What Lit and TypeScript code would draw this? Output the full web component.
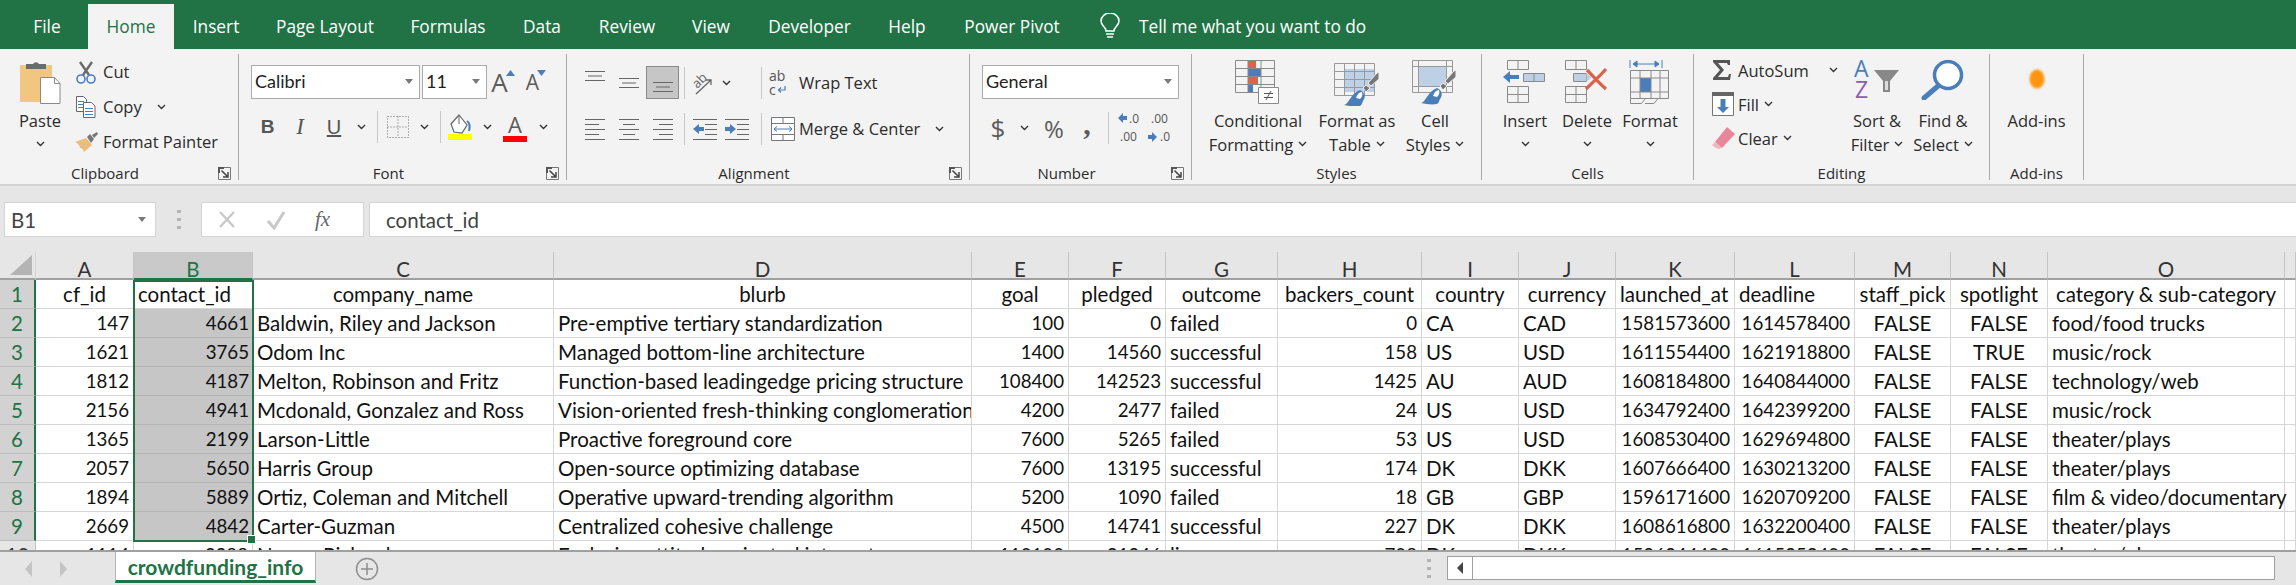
import { LitElement, css, html, svg } from "lit";
import { customElement } from "lit/decorators.js";

const GRID = "#8a8a8a";
const BLUE = "#4a7ebb";
const PALE = "#bdd0e6";
const RED = "#d9644a";

const ico = (w: number, h: number, body: unknown) =>
  html`<svg class="ico" width=${w} height=${h} viewBox="0 0 ${w} ${h}">${body}</svg>`;

const chev = () =>
  ico(9, 6, svg`<path d="M1 1l3.5 3.5L8 1" fill="none" stroke="#333" stroke-width="1.4"/>`);
const caret = () => ico(8, 5, svg`<path d="M0 0h8L4 5z" fill="#7a7a7a"/>`);
const launcher = () =>
  ico(13, 13, svg`<path d="M.5 12.5V.5h12v12z" fill="none" stroke="#777"/><path d="M0 0h6v2H2v4H0z" fill="#555"/><path d="M3.5 3.5l6 6M10 5v5H5" fill="none" stroke="#444" stroke-width="1.5"/>`);

const lines = (rows: [number, number][], y0: number, step: number, color = "#666") =>
  rows.map(([a, b], i) => svg`<path d="M${a} ${y0 + i * step + 0.5}H${b}" stroke=${color}/>`);

const pasteIcon = ico(46, 46, svg`
  <path d="M3 5h32v37H3z" fill="#f0c681"/>
  <path d="M9 9V4h7a3.5 3.5 0 0 1 6 0h7v5z" fill="#6b6b6b"/>
  <path d="M23.5 17.5h14l5.5 6v20h-19.500z" fill="#fff" stroke="#8a8a8a"/>
  <path d="M37.500 17.500v6h5.500" fill="none" stroke="#8a8a8a"/>`);
const cutIcon = ico(22, 24, svg`
  <path d="M8 15L17 2M14 15L5 2" stroke="#6b6b6b" stroke-width="2.4" fill="none"/>
  <circle cx="6" cy="19" r="4" fill="none" stroke=${BLUE} stroke-width="1.6"/>
  <circle cx="16" cy="19" r="4" fill="none" stroke=${BLUE} stroke-width="1.6"/>`);
const copyIcon = ico(22, 24, svg`
  <path d="M1.500 1.500h7l3 3v12h-10z" fill="#fff" stroke="#666"/>
  <path d="M8.500 7.500h8l3.500 3.500v11.500h-11.500z" fill="#fff" stroke="#666"/>
  ${lines([[3, 9], [3, 9], [3, 8]], 6, 3, BLUE)}
  ${lines([[10, 18], [10, 18], [10, 18]], 13, 3, BLUE)}`);
const painterIcon = ico(24, 22, svg`
  <path d="M0 11l11-4 6 7-8 7c-1-3-2-4-4-4 0-2-2-5-5-6z" fill="#e8bd7d"/>
  <path d="M12 6l3-3 4 5-3 4z" fill="#777"/>
  <path d="M17 4l5-3 1 2-4 4z" fill="#777"/>`);

const growIcon = ico(9, 6, svg`<path d="M0 6l4.500-6L9 6z" fill=${BLUE}/>`);
const shrinkIcon = ico(9, 6, svg`<path d="M0 0h9L4.500 6z" fill=${BLUE}/>`);
const bordersIcon = ico(22, 22, svg`
  <path d="M.5.5h21v21H.5zM11 .5v21M.5 11h21" fill="none" stroke="#666" stroke-dasharray="1 2"/>`);
const fillIcon = ico(26, 26, svg`
  <path d="M11 1l8 10-5 8-8-1-3-8z" fill="#fff" stroke="#666" stroke-width="1.200"/>
  <path d="M11 1v9" stroke="#666"/>
  <path d="M19 7c3 2 3 6 2 10" fill="none" stroke=${BLUE} stroke-width="2"/>
  <path d="M0 20h24v6H0z" fill="#ffff00"/>`);

const alignIcon = (rows: [number, number][], y0: number, step: number) =>
  ico(24, 24, lines(rows, y0, step));
const alignTop = alignIcon([[2, 22], [5, 19], [2, 22]], 0, 4.5);
const alignMid = alignIcon([[2, 22], [5, 19], [2, 22]], 7, 4.5);
const alignBot = alignIcon([[2, 22], [5, 19], [2, 22]], 11, 4.5);
const alignL = alignIcon([[2, 22], [2, 16], [2, 22], [2, 16], [2, 22]], 2, 5);
const alignC = alignIcon([[2, 22], [6, 18], [2, 22], [6, 18], [2, 22]], 2, 5);
const alignR = alignIcon([[2, 22], [8, 22], [2, 22], [8, 22], [2, 22]], 2, 5);
const orientIcon = ico(24, 26, svg`
  <text x="2" y="15" transform="rotate(-45 9 12)" font-family="Open Sans" font-size="13" fill="#666">ab</text>
  <path d="M5 24L20 10M15 10h5v5" fill="none" stroke="#666" stroke-width="1.300"/>`);
const indentDec = ico(26, 24, svg`
  ${lines([[1, 25], [13, 25], [13, 25], [13, 25], [1, 25]], 2, 5)}
  <path d="M1 12l6-5v3h5v4H7v3z" fill=${BLUE}/>`);
const indentInc = ico(26, 24, svg`
  ${lines([[1, 25], [13, 25], [13, 25], [13, 25], [1, 25]], 2, 5)}
  <path d="M12 12L6 7v3H1v4h5v3z" fill=${BLUE}/>`);
const wrapIcon = ico(20, 28, svg`
  <text x="1" y="12" font-family="Open Sans" font-size="14" fill="#555">ab</text>
  <text x="1" y="26" font-family="Open Sans" font-size="14" fill="#555">c</text>
  <path d="M17 17v4h-6M13 18.500L10.500 21l2.500 2.500" fill="none" stroke=${BLUE} stroke-width="1.200"/>`);
const mergeIcon = ico(24, 24, svg`
  <path d="M.5.5h23v23H.5zM.5 6.500h23M.5 17.500h23M12 .5v6M12 17.500v6" fill="#fff" stroke="#777"/>
  <path d="M3 12h18M3 12l3-2.500M3 12l3 2.500M21 12l-3-2.500M21 12l-3 2.500" fill="none" stroke=${BLUE}/>`);
const incDec = ico(26, 36, svg`
  <path d="M0 8l5-5v3h4v4H5v3z" fill=${BLUE}/>
  <text x="11" y="13" font-family="Open Sans" font-size="12" fill="#555">.0</text>
  <text x="2" y="31" font-family="Open Sans" font-size="12" fill="#555">.00</text>`);
const decInc = ico(26, 36, svg`
  <text x="4" y="13" font-family="Open Sans" font-size="12" fill="#555">.00</text>
  <path d="M10 27l-5-5v3H1v4h4v3z" fill=${BLUE}/>
  <text x="13" y="31" font-family="Open Sans" font-size="12" fill="#555">.0</text>`);

const brush = (x: number, y: number) => svg`
  <g transform="translate(${x} ${y})">
    <path d="M33 1l-9 10 3 3 8-7V0z" fill="#777" stroke="#f3f3f3"/>
    <path d="M22 13l-3 3 3 4 4-4z" fill="#777" stroke="#f3f3f3"/>
    <path d="M0 33c5-1 7-12 16-15 5 2 6 7 3 11-1 2-1 4-3 5C11 35 5 34 0 33z" fill=${BLUE}/>
    <path d="M12 26c1-3 3-6 6-6 1 3 0 5-2 7z" fill="#fff"/>
  </g>`;
const condIcon = ico(46, 44, svg`
  <path d="M13 1h8v7h-8z" fill=${RED}/><path d="M13 9h13v7H13z" fill=${BLUE}/>
  <path d="M13 17h10v7H13z" fill=${RED}/><path d="M13 25h5v7h-5z" fill=${BLUE}/>
  <path d="M.5.5h39v32H.5zM13 .5v32M26 .5v32M.5 8.500h39M.5 16.500h39M.5 24.500h39" fill="none" stroke=${GRID}/>
  <path d="M23.500 27.500h20v16h-20z" fill="#fff" stroke=${GRID}/>
  <path d="M29 33.500h9M29 37.500h9M36 31l-5 9" fill="none" stroke="#555"/>`);
const tableIcon = ico(46, 46, svg`
  <path d="M10 9h31v23H10z" fill=${PALE}/>
  <path d="M.5 3.500h40v32H.5zM10.500 3.500v32M20.500 3.500v32M30.500 3.500v32M.5 11.500h40M.5 19.500h40M.5 27.500h40" fill="none" stroke="#999"/>
  ${brush(10, 12)}`);
const stylesIcon = ico(46, 46, svg`
  <path d="M7 7h27v19H7z" fill=${PALE}/>
  <path d="M.5.5h40v32H.5zM6.500.5v32M34.500.5v32M.5 6.500h40M.5 26.500h40" fill="none" stroke="#999"/>
  ${brush(9, 10)}`);
const insertIcon = ico(44, 44, svg`
  <path d="M4.500.5h21v9h-21zM15 .5v9M4.500 26.500h21v16h-21zM15 26.500v16M4.500 34.500h21" fill="none" stroke=${GRID}/>
  <path d="M20.500 13.500h21v8h-21z" fill=${PALE} stroke=${GRID}/><path d="M31 13.500v8" stroke=${GRID}/>
  <path d="M0 17l7-6v4h9v4H7v4z" fill=${BLUE}/>`);
const deleteIcon = ico(44, 44, svg`
  <path d="M.5.5h21v9H.5zM11 .5v9M.5 26.500h21v16H.5zM11 26.500v16M.5 34.500h21" fill="none" stroke=${GRID}/>
  <path d="M8.500 13.500h13v8h-13z" fill=${PALE} stroke=${GRID}/><path d="M21.500 13v9l5-4.500z" fill=${PALE}/>
  <path d="M22 10c5 5 12 13 19 19M41 9c-6 7-13 13-20 20" fill="none" stroke=${RED} stroke-width="3.200"/>`);
const formatIcon = ico(42, 46, svg`
  <path d="M1 0v8M33 0v8" stroke=${BLUE}/>
  <path d="M4 4h26M4 4l4-3v6zM30 4l-4-3v6z" fill=${BLUE} stroke=${BLUE}/>
  <path d="M11 18h11v14H11z" fill=${BLUE}/>
  <path d="M1.500 10.500h38v28h-38zM11 10.500v28M22 10.500v28M31 10.500v28M1.500 18h38M1.500 32h38" fill="none" stroke=${GRID}/>
  <path d="M1.500 38.500v5h11l4-5M16 43.500h9l4-5" fill="none" stroke=${GRID}/>`);
const sigmaIcon = ico(20, 20, svg`<path d="M1 0h17v5h-2l-1-2H6l6 7-6 7h10l1-3h2l-1 6H1v-2l7-8-7-8z" fill="#555"/>`);
const fillDown = ico(22, 24, svg`
  <path d="M.5 3.500h21v20H.5z" fill="#fff" stroke="#777"/><path d="M0 0h22v4H0z" fill="#666"/>
  <path d="M8.500 7h5v8h3.500L11 21l-6-6h3.500z" fill=${BLUE}/>`);
const eraserIcon = ico(23, 22, svg`
  <path d="M15 0l8 7L10 21 3 15z" fill="#e8879a"/>
  <path d="M3 15l7 6-3 1c-2 0-6-3-7-4z" fill="#f2b7c2"/>`);
const sortIcon = ico(46, 40, svg`
  <text x="0" y="17" font-family="Open Sans" font-size="23" fill=${BLUE}>A</text>
  <text x="1" y="38" font-family="Open Sans" font-size="23" fill="#8b5fb0">Z</text>
  <path d="M20 10h25L36 21v11h-7V21z" fill="#888"/><path d="M31 21h3v9h-3z" fill="#ddd"/>`);
const findIcon = ico(44, 40, svg`
  <circle cx="27" cy="15" r="13.500" fill="#fff" stroke=${BLUE} stroke-width="3.500"/>
  <path d="M17 26L3 38" stroke=${BLUE} stroke-width="5" stroke-linecap="round"/>`);
const addinIcon = ico(20, 26, svg`
  <defs><filter id="b"><feGaussianBlur stdDeviation="0.8"/></filter></defs>
  <ellipse cx="10" cy="13" rx="7.500" ry="9.500" fill="#ff9409" filter="url(#b)"/>`);
const bulbIcon = ico(22, 26, svg`
  <path d="M7 18c0-4-5-5-5-10a9 8 0 0 1 18 0c0 5-5 6-5 10z" fill="none" stroke="#fff" stroke-width="1.500"/>
  <path d="M7 21h8M8 24h6" stroke="#fff" stroke-width="1.500"/>`);

const TABS = ["File", "Home", "Insert", "Page Layout", "Formulas", "Data", "Review", "View", "Developer", "Help", "Power Pivot"];
const COLS = ["A", "B", "C", "D", "E", "F", "G", "H", "I", "J", "K", "L", "M", "N", "O", ""];
// l/r/c for the data rows of each column
const ALIGN = "rrllrrlrllrrccl";
const HEAD = ["cf_id", "contact_id", "company_name", "blurb", "goal", "pledged", "outcome", "backers_count", "country", "currency", "launched_at", "deadline", "staff_pick", "spotlight", "category & sub-category"];
const HEAD_ALIGN = "clccccccccllccc";
const ROWS = [
  ["147", "4661", "Baldwin, Riley and Jackson", "Pre-emptive tertiary standardization", "100", "0", "failed", "0", "CA", "CAD", "1581573600", "1614578400", "FALSE", "FALSE", "food/food trucks"],
  ["1621", "3765", "Odom Inc", "Managed bottom-line architecture", "1400", "14560", "successful", "158", "US", "USD", "1611554400", "1621918800", "FALSE", "TRUE", "music/rock"],
  ["1812", "4187", "Melton, Robinson and Fritz", "Function-based leadingedge pricing structure", "108400", "142523", "successful", "1425", "AU", "AUD", "1608184800", "1640844000", "FALSE", "FALSE", "technology/web"],
  ["2156", "4941", "Mcdonald, Gonzalez and Ross", "Vision-oriented fresh-thinking conglomeration", "4200", "2477", "failed", "24", "US", "USD", "1634792400", "1642399200", "FALSE", "FALSE", "music/rock"],
  ["1365", "2199", "Larson-Little", "Proactive foreground core", "7600", "5265", "failed", "53", "US", "USD", "1608530400", "1629694800", "FALSE", "FALSE", "theater/plays"],
  ["2057", "5650", "Harris Group", "Open-source optimizing database", "7600", "13195", "successful", "174", "DK", "DKK", "1607666400", "1630213200", "FALSE", "FALSE", "theater/plays"],
  ["1894", "5889", "Ortiz, Coleman and Mitchell", "Operative upward-trending algorithm", "5200", "1090", "failed", "18", "GB", "GBP", "1596171600", "1620709200", "FALSE", "FALSE", "film & video/documentary"],
  ["2669", "4842", "Carter-Guzman", "Centralized cohesive challenge", "4500", "14741", "successful", "227", "DK", "DKK", "1608616800", "1632200400", "FALSE", "FALSE", "theater/plays"],
  ["1114", "3388", "Nunez-Richardson", "Exclusive attitude-oriented intranet", "110100", "21946", "live", "708", "DK", "DKK", "1596344400", "1615352400", "FALSE", "FALSE", "theater/plays"],
];

@customElement("app-root")
export class AppRoot extends LitElement {
  static styles = css`
    :host {
      display: block;
      width: 2296px;
      height: 585px;
      overflow: hidden;
      background: #e6e6e6;
      font-family: "Open Sans", sans-serif;
      color: #2b2b2b;
    }
    .ico { display: block; flex: none; }

    .tabs {
      height: 49px;
      background: #217346;
      display: grid;
      grid-template-columns: 82px 86px 84px 134px 112px 76px 94px 74px 123px 72px 138px 57px 1fr;
      color: #fff;
      font-size: 17.300px;
      padding-left: 6px;
      box-sizing: border-box;
    }
    .tab { display: flex; align-items: center; justify-content: center; padding-top: 3px; }
    .tab.on { background: #f3f3f3; color: #217346; margin-top: 4px; padding-top: 0; }
    .bulb { display: flex; align-items: center; justify-content: flex-end; padding-right: 17px; padding-top: 3px; }
    .tell { display: flex; align-items: center; padding: 3px 0 0 1px; }

    .ribbon {
      height: 137px;
      box-sizing: border-box;
      background: #f3f3f3;
      display: grid;
      grid-template-columns: 239px 328px 403px 222px 290px 212px 296px 94px;
      font-size: 16.500px;
      border-bottom: 2px solid #d2d2d2;
    }
    .group {
      margin-top: 5px;
      height: 126px;
      border-right: 1px solid #a9a9a9;
      display: flex;
      flex-direction: column;
    }
    .body { height: 110px; display: flex; }
    .foot { height: 16px; box-sizing: border-box; padding-top: 2px; display: flex; align-items: center; line-height: 22px; font-size: 15px; }
    .foot span { flex: 1; text-align: center; }
    .launch { width: 28px; display: flex; justify-content: center; align-items: center; }

    .big { display: flex; flex-direction: column; align-items: center; padding-top: 6px; white-space: nowrap; }
    .big-ico { height: 48px; }
    .big-line { display: flex; align-items: center; gap: 5px; height: 24px; }
    .big-chev { height: 24px; display: flex; align-items: center; }

    .stack { display: flex; flex-direction: column; }
    .line { height: 35px; display: flex; align-items: center; white-space: nowrap; }
    .line .slot { width: 28px; }

    .paste { width: 80px; }
    .clip-stack { margin-left: -5px; }
    .clip-chev { margin-left: 15px; }

    .pad12 { padding: 11px 0 0 12px; display: flex; flex-direction: column; gap: 11px; }
    .row { display: grid; align-items: center; justify-items: center; }
    .font-top { grid-template-columns: 169px 2px 65px 32px 34px; height: 34px; }
    .font-low { grid-template-columns: 33px 32px 36px 18px 14px 28px 24px 8px 34px 18px 38px 18px; height: 34px; }
    .num-top { height: 34px; width: 197px; }
    .combo {
      justify-self: stretch;
      height: 34px;
      box-sizing: border-box;
      border: 1px solid #ababab;
      background: #fff;
      display: flex;
      align-items: center;
      justify-content: space-between;
      padding: 0 6px 2px 3px;
      font: 18px "Lato", sans-serif;
      color: #222;
    }
    .grow { display: flex; align-items: flex-start; color: #5c5c5c; }
    .grow b { font: 400 26px/30px "Open Sans", sans-serif; }
    .shrink b { font-size: 21px; }
    .grow .ico { margin: 3px 0 0 -2px; }
    .gl { font: 700 19px "Liberation Sans", sans-serif; color: #555; }
    .gl.i { font-style: italic; font-family: "Liberation Serif", serif; font-weight: 400; font-size: 23px; }
    .gl.u { text-decoration: underline; font-weight: 400; font-size: 20px; }
    .colorA { display: flex; flex-direction: column; align-items: center; color: #5c5c5c; font-size: 22px; line-height: 23px; }
    .colorA i { display: block; width: 24px; height: 6px; background: #f00; }
    .sep { width: 1px; height: 32px; background: #c8c8c8; }

    .align { padding: 12px 0 0 11px; display: flex; flex-direction: column; gap: 13px; }
    .al-top { grid-template-columns: 34px 34px 33px 10px 28px 18px 26px 1px 4px 24px auto; justify-content: start; height: 33px; }
    .al-low { grid-template-columns: 34px 34px 34px 9px 31px 34px 7px 1px 9px 24px auto; justify-content: start; height: 33px; }
    .al-sel {
      width: 33px;
      height: 33px;
      box-sizing: border-box;
      border: 1px solid #8a8a8a;
      background: #c6c6c6;
      display: flex;
      justify-content: center;
      align-items: center;
    }
    .txt { justify-self: start; white-space: nowrap; padding-left: 9px; display: flex; align-items: center; }
    .txt.tight { padding-left: 4px; }
    .merge-chev { margin-left: 15px; }

    .num-low { grid-template-columns: 32px 20px 40px 26px 16px 29px 30px; height: 34px; }
    .num-low .dollar { font: 400 26px "Open Sans", sans-serif; color: #5c5c5c; }
    .num-low .pct { font: 400 24px "Open Sans", sans-serif; color: #5c5c5c; }
    .num-low .comma { font: 700 30px/20px "Liberation Serif", serif; color: #5c5c5c; margin-top: -8px; }

    .styles { padding-left: 18px; display: grid; grid-template-columns: 96px 102px 54px; }
    .cells { padding-left: 18px; display: grid; grid-template-columns: 50px 74px 52px; }
    .edit-stack { width: 150px; padding-left: 18px; box-sizing: border-box; margin-top: -1px; }
    .edit-stack .line { height: 34px; gap: 5px; }
    .edit-stack .slot-wide { width: 21px; }
    .edit-big { width: 66px; }
    .addins { width: 100%; }
    .addin-ico { margin-top: 6px; }

    .formula { display: flex; margin-top: 16px; height: 35px; font: 20.500px "Lato", sans-serif; color: #444; }
    .name {
      margin-left: 4px;
      width: 152px;
      box-sizing: border-box;
      background: #fff;
      border: 1px solid #d4d4d4;
      display: flex;
      align-items: center;
      justify-content: space-between;
      padding: 0 9px 0 6px;
    }
    .dots { width: 45px; display: flex; justify-content: center; align-items: center; }
    .fxbox {
      width: 163px;
      box-sizing: border-box;
      background: #fff;
      border: 1px solid #d4d4d4;
      display: flex;
      align-items: center;
      padding-left: 15px;
      gap: 29px;
    }
    .fx { font: italic 21px "Liberation Serif", serif; color: #666; }
    .input {
      margin-left: 5px;
      flex: 1;
      background: #fff;
      border: 1px solid #d4d4d4;
      border-right: none;
      display: flex;
      align-items: center;
      padding-left: 16px;
    }

    .sheet-wrap { position: relative; margin-top: 15px; height: 298px; overflow: hidden; border-bottom: 2px solid #a0a0a0; }
    .sheet {
      display: grid;
      grid-template-columns: 36px 98px 119px 301px 418px 97px 97px 112px 144px 97px 97px 119px 120px 96px 97px 237px 11px;
      grid-template-rows: 28px repeat(10, 29px);
      font: 20.500px/28px "Lato", sans-serif;
      color: #111;
      background: #fff;
    }
    .c {
      box-sizing: border-box;
      border-right: 1px solid #d6d6d6;
      border-bottom: 1px solid #d6d6d6;
      padding: 0 4px;
      white-space: nowrap;
      overflow: hidden;
    }
    .c.l { text-align: left; }
    .c.r { text-align: right; }
    .c.mid { text-align: center; }
    .c.num { font-size: 18.700px; }
    .c.over { overflow: visible; }
    .ch {
      background: #e6e6e6;
      border-right: 1px solid #c4c4c4;
      border-bottom: 2px solid #a0a0a0;
      padding-top: 3px;
      text-align: center;
      color: #333;
    }
    .ch.sel { background: #c9c9c9; color: #217346; border-bottom-color: #217346; }
    .corner { background: #e6e6e6; border-bottom: 2px solid #a0a0a0; display: flex; align-items: center; justify-content: flex-end; padding-right: 3px; }
    .rh {
      background: #d2d2d2;
      color: #217346;
      text-align: center;
      border-right: 2px solid #217346;
      border-bottom: 1px solid #bcbcbc;
    }
    .rh.plain { background: #e6e6e6; border-right: 1px solid #c4c4c4; color: #333; }
    .c.b { background: #c6c6c6; border-bottom-color: #b4b4b4; border-right: none; }
    .c.b1 { border-right: none; }
    .selection {
      position: absolute;
      left: 133px;
      top: 28px;
      width: 121px;
      height: 262px;
      box-sizing: border-box;
      border: 2px solid #217346;
    }
    .selection i {
      position: absolute;
      right: -4px;
      bottom: -4px;
      width: 7px;
      height: 7px;
      background: #217346;
      border: 1px solid #fff;
    }

    .bottom { height: 33px; display: flex; font-size: 15px; }
    .nav { width: 115px; padding-left: 25px; box-sizing: border-box; display: flex; gap: 26px; align-items: center; }
    .sheet-tab {
      width: 201px;
      height: 31px;
      box-sizing: border-box;
      background: #fff;
      border: 1px solid #b4b4b4;
      border-top: none;
      border-bottom: 3px solid #217346;
      display: flex;
      align-items: center;
      justify-content: center;
      font: 700 21px "Lato", sans-serif;
      color: #217346;
    }
    .plus { margin-left: 39px; display: flex; align-items: center; }
    .grip { margin-left: auto; display: flex; align-items: center; margin-right: 16px; }
    .scroll {
      margin: 4px 21px 0 0;
      width: 828px;
      height: 24px;
      box-sizing: border-box;
      background: #fff;
      border: 1px solid #a0a0a0;
      display: flex;
    }
    .scroll div { width: 24px; border-right: 1px solid #a0a0a0; display: flex; align-items: center; justify-content: center; }
  `;

  big(icon: unknown, first: string, second?: string, cls = "") {
    return html`<div class="big ${cls}">
      <div class="big-ico">${icon}</div>
      <div class="big-line">${first}</div>
      ${second
        ? html`<div class="big-line">${second} ${chev()}</div>`
        : html`<div class="big-chev">${chev()}</div>`}
    </div>`;
  }

  renderTabs() {
    return html`<div class="tabs">
      ${TABS.map((t) => html`<div class="tab ${t === "Home" ? "on" : ""}">${t}</div>`)}
      <div class="bulb">${bulbIcon}</div>
      <div class="tell">Tell me what you want to do</div>
    </div>`;
  }

  renderRibbon() {
    return html`<div class="ribbon">
      <section class="group">
        <div class="body">
          ${this.big(pasteIcon, "Paste", undefined, "paste")}
          <div class="stack clip-stack">
            <div class="line"><div class="slot">${cutIcon}</div>Cut</div>
            <div class="line"><div class="slot">${copyIcon}</div>Copy<span class="clip-chev">${chev()}</span></div>
            <div class="line"><div class="slot">${painterIcon}</div>Format Painter</div>
          </div>
        </div>
        <div class="foot"><span>Clipboard</span><div class="launch">${launcher()}</div></div>
      </section>

      <section class="group">
        <div class="body pad12">
          <div class="row font-top">
            <div class="combo">Calibri ${caret()}</div>
            <div></div>
            <div class="combo">11 ${caret()}</div>
            <div class="grow"><b>A</b>${growIcon}</div>
            <div class="grow shrink"><b>A</b>${shrinkIcon}</div>
          </div>
          <div class="row font-low">
            <span class="gl">B</span><span class="gl i">I</span><span class="gl u">U</span>${chev()}
            <div class="sep"></div>${bordersIcon}${chev()}<div class="sep"></div>
            ${fillIcon}${chev()}
            <div class="colorA">A<i></i></div>${chev()}
          </div>
        </div>
        <div class="foot"><span>Font</span><div class="launch">${launcher()}</div></div>
      </section>

      <section class="group">
        <div class="body align">
          <div class="row al-top">
            ${alignTop}${alignMid}<div class="al-sel">${alignBot}</div><div class="sep"></div>
            ${orientIcon}${chev()}<div></div><div class="sep"></div><div></div>${wrapIcon}
            <div class="txt">Wrap Text</div>
          </div>
          <div class="row al-low">
            ${alignL}${alignC}${alignR}<div class="sep"></div>
            ${indentDec}${indentInc}<div></div><div class="sep"></div><div></div>${mergeIcon}
            <div class="txt tight">Merge &amp; Center<span class="merge-chev">${chev()}</span></div>
          </div>
        </div>
        <div class="foot"><span>Alignment</span><div class="launch">${launcher()}</div></div>
      </section>

      <section class="group">
        <div class="body pad12">
          <div class="row num-top">
            <div class="combo">General ${caret()}</div>
          </div>
          <div class="row num-low">
            <span class="dollar">$</span>${chev()}<span class="pct">%</span><span class="comma">,</span>
            <div class="sep"></div>${incDec}${decInc}
          </div>
        </div>
        <div class="foot"><span>Number</span><div class="launch">${launcher()}</div></div>
      </section>

      <section class="group">
        <div class="body styles">
          ${this.big(condIcon, "Conditional", "Formatting")}
          ${this.big(tableIcon, "Format as", "Table")}
          ${this.big(stylesIcon, "Cell", "Styles")}
        </div>
        <div class="foot"><span>Styles</span></div>
      </section>

      <section class="group">
        <div class="body cells">
          ${this.big(insertIcon, "Insert")}
          ${this.big(deleteIcon, "Delete")}
          ${this.big(formatIcon, "Format")}
        </div>
        <div class="foot"><span>Cells</span></div>
      </section>

      <section class="group">
        <div class="body">
          <div class="stack edit-stack">
            <div class="line"><div class="slot-wide">${sigmaIcon}</div>AutoSum<span class="clip-chev">${chev()}</span></div>
            <div class="line"><div class="slot-wide">${fillDown}</div>Fill ${chev()}</div>
            <div class="line"><div class="slot-wide">${eraserIcon}</div>Clear ${chev()}</div>
          </div>
          ${this.big(sortIcon, "Sort &", "Filter", "edit-big")}
          ${this.big(findIcon, "Find &", "Select", "edit-big")}
        </div>
        <div class="foot"><span>Editing</span></div>
      </section>

      <section class="group">
        <div class="body">
          <div class="big addins">
            <div class="big-ico"><div class="addin-ico">${addinIcon}</div></div>
            <div class="big-line">Add-ins</div>
          </div>
        </div>
        <div class="foot"><span>Add-ins</span></div>
      </section>
    </div>`;
  }

  renderFormula() {
    return html`<div class="formula">
      <div class="name">B1 ${caret()}</div>
      <div class="dots">${ico(4, 22, svg`<path d="M0 1h4v3H0zM0 9h4v3H0zM0 17h4v3H0z" fill="#b4b4b4"/>`)}</div>
      <div class="fxbox">
        ${ico(20, 20, svg`<path d="M3 2l14 15M17 2L3 17" stroke="#c8c8c8" stroke-width="2.400"/>`)}
        ${ico(20, 20, svg`<path d="M2 11l6 7L18 2" fill="none" stroke="#c8c8c8" stroke-width="3"/>`)}
        <span class="fx">fx</span>
      </div>
      <div class="input">contact_id</div>
    </div>`;
  }

  renderSheet() {
    const alignClass = (a: string) => (a === "c" ? "mid" : a);
    const numeric = (v: string) => (/^\d+$/.test(v) ? "num" : "");
    return html`<div class="sheet-wrap">
      <div class="sheet">
        <div class="c corner">${ico(22, 20, svg`<path d="M22 0v20H0z" fill="#b4b4b4"/>`)}</div>
        ${COLS.map((c) => html`<div class="c ch ${c === "B" ? "sel" : ""}">${c}</div>`)}
        <div class="c rh">1</div>
        ${HEAD.map((h, i) => html`<div class="c ${alignClass(HEAD_ALIGN[i])} ${i === 1 ? "b1" : ""}">${h}</div>`)}
        <div class="c"></div>
        ${ROWS.map((row, r) => html`
          <div class="c rh ${r === 8 ? "plain" : ""}">${r + 2}</div>
          ${row.map((v, i) => html`<div class="c ${alignClass(ALIGN[i])} ${numeric(v)} ${i === 1 && r < 8 ? "b" : ""} ${i === 14 ? "over" : ""}">${v}</div>`)}
          <div class="c"></div>
        `)}
      </div>
      <div class="selection"><i></i></div>
    </div>`;
  }

  renderBottom() {
    return html`<div class="bottom">
      <div class="nav">
        ${ico(8, 16, svg`<path d="M7 0v16L0 8z" fill="#c4c4c4"/>`)}
        ${ico(8, 16, svg`<path d="M1 0v16l7-8z" fill="#c4c4c4"/>`)}
      </div>
      <div class="sheet-tab">crowdfunding_info</div>
      <div class="plus">${ico(24, 24, svg`<circle cx="12" cy="12" r="10.500" fill="none" stroke="#8f8f8f" stroke-width="1.500"/><path d="M12 6v12M6 12h12" stroke="#8f8f8f" stroke-width="1.500"/>`)}</div>
      <div class="grip">${ico(4, 22, svg`<path d="M0 1h4v3H0zM0 9h4v3H0zM0 17h4v3H0z" fill="#b4b4b4"/>`)}</div>
      <div class="scroll"><div>${ico(6, 12, svg`<path d="M6 0v12L0 6z" fill="#444"/>`)}</div></div>
    </div>`;
  }

  render() {
    return html`${this.renderTabs()}${this.renderRibbon()}${this.renderFormula()}${this.renderSheet()}${this.renderBottom()}`;
  }
}
